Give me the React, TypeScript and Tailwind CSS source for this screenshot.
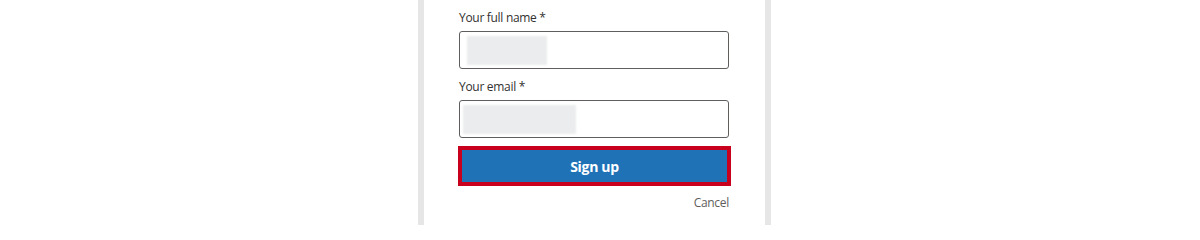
import * as React from "react";

type FieldProps = {
  label: string;
  blurWidth: string;
  blurLeft: string;
};

function Field({ label, blurWidth, blurLeft }: FieldProps) {
  return (
    <div className="flex flex-col">
      <label className="h-4 text-[12px] leading-4 tracking-[-0.3px] text-[#323130]">{label}</label>
      <div className="relative mt-[5px] h-[38px] w-[270px] rounded-[3px] border border-[#605e5c] bg-white">
        {/* redacted value */}
        <div className={`absolute top-[4px] bottom-[3px] bg-[#ebeced] blur-[1px] ${blurWidth} ${blurLeft}`} />
      </div>
    </div>
  );
}

export default function App() {
  return (
    <div
      className="flex h-[225px] w-[1200px] justify-start overflow-hidden bg-white"
      style={{ fontFamily: '"Open Sans", "Noto Sans", sans-serif' }}
    >
      <div className="ml-[418px] flex h-full w-[353px] flex-col border-x-[6px] border-[#e6e6e6] bg-white pl-[35px] pt-[10px]">
        <div className="flex flex-col gap-[10px]">
          <Field label="Your full name *" blurWidth="w-[80px]" blurLeft="left-[7px]" />
          <Field label="Your email *" blurWidth="w-[113px]" blurLeft="left-[3px]" />
        </div>
        <button
          type="button"
          className="-ml-px mt-[8px] h-[40px] w-[273px] border-4 border-[#c8001e] bg-[#2072b7] text-[14px] font-bold tracking-[-0.3px] text-white"
        >
          Sign up
        </button>
        <div className="mt-[9px] flex w-[270px] justify-end">
          <span className="text-[12px] leading-4 tracking-[-0.3px] text-[#605e5c]">Cancel</span>
        </div>
      </div>
    </div>
  );
}
